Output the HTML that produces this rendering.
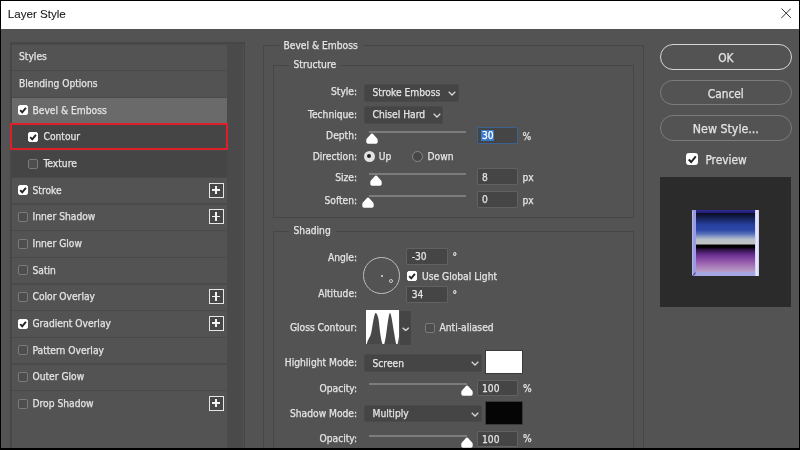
<!DOCTYPE html>
<html><head><meta charset="utf-8"><title>Layer Style</title>
<style>
*{box-sizing:border-box;margin:0;padding:0}
html,body{width:800px;height:450px;overflow:hidden;background:#535353}
body{position:relative;will-change:transform;-webkit-text-stroke:0.25px;font-family:"DejaVu Sans Condensed","Liberation Sans",sans-serif;font-size:10.2px;color:#e4e4e4}
div,span,i,b,svg{position:absolute}
#title{left:0;top:0;width:800px;height:28.6px;background:#fff;color:#1a1a1a}
#title span{-webkit-text-stroke:0.1px;left:7.8px;top:6.5px;font-size:11.6px;font-family:"Liberation Sans",sans-serif;white-space:nowrap}
#title svg{left:780.5px;top:8px}
.bk{background:#000}
#list{left:10px;top:41.6px;width:235px;height:410px;background:#4a4a4a;border:2px solid #474747;border-right:1px solid #464646}
.row{left:12px;width:215px;height:25.4px;background:#535353}
.row.sel{background:#6a6a6a}
.row.sub{background:#454545}
.lbl{top:6.8px;white-space:nowrap}
.cb{top:7.4px;width:10px;height:10px;border:1px solid #7a7a7a;border-radius:2px;background:#4d4d4d}
.cb.on{background:#fff;border-color:#fff}
.cb svg{left:-1px;top:-1px}
.plus{left:196.9px;top:4.9px;width:15.2px;height:15px;border:1.5px solid #e6e6e6;background:#474747}
.plus i{left:1.9px;top:5.1px;width:8.4px;height:1.8px;background:#f2f2f2}
.plus b{left:5.2px;top:1.8px;width:1.8px;height:8.4px;background:#f2f2f2}
#red{left:9.6px;top:123.1px;width:218.7px;height:27.1px;border:2.9px solid #dc1f28}
.grp{border:1px solid #464646}
.gt{background:#535353;padding:0 5px;white-space:nowrap;height:13px;line-height:13px}
.fl{right:442.9px;white-space:nowrap;height:13px;line-height:13px}
.dd{background:#454545;border:1px solid #4a4a4a;border-radius:2px;height:17.5px;left:364px}
.dd span{left:7.5px;top:2px;white-space:nowrap}
.dd svg{top:6px}
.inp{background:#454545;border:1px solid #616161;height:16.6px;border-radius:1px}
.inp span{left:4.5px;top:1.6px;white-space:nowrap}
.u{white-space:nowrap;height:13px;line-height:13px}
.trk{height:2px;background:#7c7c7c}
.th{width:12px;height:12px}
</style></head><body>
<div id="title"><span>Layer Style</span>
<svg width="10.4" height="10.4" viewBox="0 0 11 11"><path d="M0.5 0.5L10.5 10.5M10.5 0.5L0.5 10.5" stroke="#222" stroke-width="1" fill="none"/></svg></div>
<div id="list"></div>
<div style="left:242.8px;top:44px;width:1.3px;height:406px;background:#515151"></div>
<div class="row" style="top:44.60px">
<span class="lbl" style="left:7px">Styles</span>
</div>
<div class="row" style="top:71.27px">
<span class="lbl" style="left:7px">Blending Options</span>
</div>
<div class="row sel" style="top:97.93px">
<span class="cb on" style="left:6px"><svg viewBox="0 0 10 10" width="10" height="10"><path d="M2.2 5.2 L4.2 7.3 L7.9 2.8" fill="none" stroke="#222" stroke-width="1.9"/></svg></span>
<span class="lbl" style="left:20.5px">Bevel &amp; Emboss</span>
</div>
<div class="row sub" style="top:124.60px">
<span class="cb on" style="left:16.2px"><svg viewBox="0 0 10 10" width="10" height="10"><path d="M2.2 5.2 L4.2 7.3 L7.9 2.8" fill="none" stroke="#222" stroke-width="1.9"/></svg></span>
<span class="lbl" style="left:31.5px">Contour</span>
</div>
<div class="row sub" style="top:151.27px">
<span class="cb" style="left:16.2px"></span>
<span class="lbl" style="left:31.5px">Texture</span>
</div>
<div class="row" style="top:177.94px">
<span class="cb on" style="left:6px"><svg viewBox="0 0 10 10" width="10" height="10"><path d="M2.2 5.2 L4.2 7.3 L7.9 2.8" fill="none" stroke="#222" stroke-width="1.9"/></svg></span>
<span class="lbl" style="left:20.5px">Stroke</span>
<span class="plus"><i></i><b></b></span>
</div>
<div class="row" style="top:204.60px">
<span class="cb" style="left:6px"></span>
<span class="lbl" style="left:20.5px">Inner Shadow</span>
<span class="plus"><i></i><b></b></span>
</div>
<div class="row" style="top:231.27px">
<span class="cb" style="left:6px"></span>
<span class="lbl" style="left:20.5px">Inner Glow</span>
</div>
<div class="row" style="top:257.94px">
<span class="cb" style="left:6px"></span>
<span class="lbl" style="left:20.5px">Satin</span>
</div>
<div class="row" style="top:284.60px">
<span class="cb" style="left:6px"></span>
<span class="lbl" style="left:20.5px">Color Overlay</span>
<span class="plus"><i></i><b></b></span>
</div>
<div class="row" style="top:311.27px">
<span class="cb on" style="left:6px"><svg viewBox="0 0 10 10" width="10" height="10"><path d="M2.2 5.2 L4.2 7.3 L7.9 2.8" fill="none" stroke="#222" stroke-width="1.9"/></svg></span>
<span class="lbl" style="left:20.5px">Gradient Overlay</span>
<span class="plus"><i></i><b></b></span>
</div>
<div class="row" style="top:337.94px">
<span class="cb" style="left:6px"></span>
<span class="lbl" style="left:20.5px">Pattern Overlay</span>
</div>
<div class="row" style="top:364.60px">
<span class="cb" style="left:6px"></span>
<span class="lbl" style="left:20.5px">Outer Glow</span>
</div>
<div class="row" style="top:391.27px">
<span class="cb" style="left:6px"></span>
<span class="lbl" style="left:20.5px">Drop Shadow</span>
<span class="plus"><i></i><b></b></span>
</div>
<div class="row" style="top:415px;height:34px"></div>
<div id="red"></div>

<!-- group boxes -->
<div class="grp" style="left:262.5px;top:45px;width:381.5px;height:420px"></div>
<div class="gt" style="left:278.5px;top:39px">Bevel &amp; Emboss</div>
<div class="grp" style="left:272.5px;top:64.8px;width:361.5px;height:153px"></div>
<div class="gt" style="left:288.5px;top:58px">Structure</div>
<div class="grp" style="left:272.5px;top:231px;width:361.5px;height:230px"></div>
<div class="gt" style="left:288.5px;top:224px">Shading</div>

<!-- Structure -->
<div class="fl" style="top:84.8px">Style:</div>
<div class="dd" style="top:84px;width:95px"><span>Stroke Emboss</span><svg style="left:83px" width="8" height="5" viewBox="0 0 8 5"><path d="M0.7 0.7L4 4L7.3 0.7" fill="none" stroke="#d8d8d8" stroke-width="1.25"/></svg></div>
<div class="fl" style="top:107.8px">Technique:</div>
<div class="dd" style="top:106px;width:79px"><span>Chisel Hard</span><svg style="left:67.5px" width="8" height="5" viewBox="0 0 8 5"><path d="M0.7 0.7L4 4L7.3 0.7" fill="none" stroke="#d8d8d8" stroke-width="1.25"/></svg></div>

<div class="fl" style="top:129.3px">Depth:</div>
<div class="trk" style="left:368.8px;top:131.1px;width:97.6px"></div>
<svg class="th" style="left:365.7px;top:133px" viewBox="0 0 12 12"><path d="M6 0.5Q6.7 0.5 7.3 1.3L11.1 5.6Q11.7 6.3 11.7 7.1V9Q11.7 10.8 9.9 10.8H2.1Q0.3 10.8 0.3 9V7.1Q0.3 6.3 0.9 5.6L4.7 1.3Q5.3 0.5 6 0.5Z" fill="#fff"/></svg>
<div class="inp" style="left:476.5px;top:127.2px;width:41.5px;border:1.3px solid #3a628f"><i style="left:3.5px;top:2px;width:12.5px;height:10.6px;background:#3a78c8"></i><span style="color:#fff">30</span></div>
<div class="u" style="left:522.5px;top:129.6px">%</div>

<div class="fl" style="top:149.8px">Direction:</div>
<div style="left:363.7px;top:150.7px;width:11px;height:11px;border-radius:50%;background:#e2e2e2"><i style="left:3.3px;top:3.3px;width:4.4px;height:4.4px;border-radius:50%;background:#222"></i></div>
<div class="u" style="left:378.7px;top:149.8px">Up</div>
<div style="left:411.5px;top:150.7px;width:11px;height:11px;border-radius:50%;background:#474747;border:1.2px solid #888"></div>
<div class="u" style="left:427.5px;top:149.8px">Down</div>

<div class="fl" style="top:171px">Size:</div>
<div class="trk" style="left:368.8px;top:173.4px;width:97.6px"></div>
<svg class="th" style="left:370.4px;top:175.2px" viewBox="0 0 12 12"><path d="M6 0.5Q6.7 0.5 7.3 1.3L11.1 5.6Q11.7 6.3 11.7 7.1V9Q11.7 10.8 9.9 10.8H2.1Q0.3 10.8 0.3 9V7.1Q0.3 6.3 0.9 5.6L4.7 1.3Q5.3 0.5 6 0.5Z" fill="#fff"/></svg>
<div class="inp" style="left:476.5px;top:168.3px;width:41.5px"><span style="top:2.3px">8</span></div>
<div class="u" style="left:522.5px;top:170.5px">px</div>

<div class="fl" style="top:193.5px">Soften:</div>
<div class="trk" style="left:368.8px;top:194.7px;width:97.6px"></div>
<svg class="th" style="left:362px;top:197px" viewBox="0 0 12 12"><path d="M6 0.5Q6.7 0.5 7.3 1.3L11.1 5.6Q11.7 6.3 11.7 7.1V9Q11.7 10.8 9.9 10.8H2.1Q0.3 10.8 0.3 9V7.1Q0.3 6.3 0.9 5.6L4.7 1.3Q5.3 0.5 6 0.5Z" fill="#fff"/></svg>
<div class="inp" style="left:476.5px;top:191.3px;width:41.5px"><span>0</span></div>
<div class="u" style="left:522.5px;top:193.5px">px</div>

<!-- Shading -->
<div class="fl" style="top:251px">Angle:</div>
<div style="left:363.3px;top:257.3px;width:36.8px;height:36.8px;border-radius:50%;border:1px solid #bdbdbd"></div>
<i style="left:381px;top:275px;width:1.5px;height:1.5px;background:#ccc;border-radius:50%"></i>
<i style="left:389.3px;top:279.3px;width:4px;height:4px;border:0.8px solid #ccc;border-radius:50%"></i>
<div class="inp" style="left:406.2px;top:248.2px;width:41.5px"><span>-30</span></div>
<div class="u" style="left:452.5px;top:249.5px">°</div>
<div class="cb on" style="left:406.7px;top:271.2px"><svg viewBox="0 0 10 10" width="10" height="10"><path d="M2.2 5.2 L4.2 7.3 L7.9 2.8" fill="none" stroke="#222" stroke-width="1.9"/></svg></div>
<div class="u" style="left:422px;top:269.5px">Use Global Light</div>
<div class="fl" style="top:286.8px">Altitude:</div>
<div class="inp" style="left:406.2px;top:286.2px;width:41.5px"><span>34</span></div>
<div class="u" style="left:452.5px;top:287.5px">°</div>

<div class="fl" style="top:320.5px">Gloss Contour:</div>
<svg style="left:365.5px;top:310.2px" width="33.4" height="34.3" viewBox="0 0 33.4 34.3"><rect width="33.4" height="34.3" fill="#fff"/><path d="M0.6 34.3C1.5 31 2.8 28.5 4.3 26C5.8 22 6.2 16 7.2 11.5C8 7.5 8.8 3 9.6 3C10.6 3 11.6 5 12.4 8.5C13.3 14 13.8 22 14.8 27C15.4 30.5 16 33 16.6 34.3H18.2C18.8 32 19.4 29 20 25.5C20.8 20 21.6 13 22.4 8.5C23 5 23.5 3 24 3C24.6 3 25.3 6 26 10C26.8 15 27.6 20 28.4 24.5C29 28.5 29.6 32 30.3 34.3H31.6C32.2 32 32.8 28 33.4 24V34.3Z" fill="#484848"/></svg>
<div style="left:399.9px;top:310.5px;width:11.5px;height:34px;background:#454545"><svg style="left:1.8px;top:16.6px" width="7.4" height="4.4" viewBox="0 0 7.4 4.4"><path d="M0.6 0.7L3.7 3.6L6.8 0.7" fill="none" stroke="#d8d8d8" stroke-width="1.3"/></svg></div>
<div class="cb" style="left:424.5px;top:322.8px"></div>
<div class="u" style="left:439.5px;top:320.5px">Anti-aliased</div>

<div class="fl" style="top:356px">Highlight Mode:</div>
<div class="dd" style="top:354.3px;width:117.7px"><span style="top:2.8px">Screen</span><svg style="left:106px" width="8" height="5" viewBox="0 0 8 5"><path d="M0.7 0.7L4 4L7.3 0.7" fill="none" stroke="#d8d8d8" stroke-width="1.25"/></svg></div>
<div style="left:485.4px;top:350.2px;width:37.4px;height:24.3px;background:#fff;border:1px solid #3a3a3a"></div>
<div class="fl" style="top:381.5px">Opacity:</div>
<div class="trk" style="left:368.7px;top:383.2px;width:98px"></div>
<svg class="th" style="left:460.7px;top:385px" viewBox="0 0 12 12"><path d="M6 0.5Q6.7 0.5 7.3 1.3L11.1 5.6Q11.7 6.3 11.7 7.1V9Q11.7 10.8 9.9 10.8H2.1Q0.3 10.8 0.3 9V7.1Q0.3 6.3 0.9 5.6L4.7 1.3Q5.3 0.5 6 0.5Z" fill="#fff"/></svg>
<div class="inp" style="left:476.5px;top:379.5px;width:41.5px;height:16px"><span style="top:2.2px">100</span></div>
<div class="u" style="left:523px;top:381.5px">%</div>

<div class="fl" style="top:406.5px">Shadow Mode:</div>
<div class="dd" style="top:404.7px;width:117.7px"><span>Multiply</span><svg style="left:106px" width="8" height="5" viewBox="0 0 8 5"><path d="M0.7 0.7L4 4L7.3 0.7" fill="none" stroke="#d8d8d8" stroke-width="1.25"/></svg></div>
<div style="left:485.4px;top:401px;width:37.4px;height:24.2px;background:#050505;border:1px solid #3a3a3a"></div>
<div class="fl" style="top:432.2px">Opacity:</div>
<div class="trk" style="left:368.7px;top:434.5px;width:98px"></div>
<svg class="th" style="left:460.7px;top:436.5px" viewBox="0 0 12 12"><path d="M6 0.5Q6.7 0.5 7.3 1.3L11.1 5.6Q11.7 6.3 11.7 7.1V9Q11.7 10.8 9.9 10.8H2.1Q0.3 10.8 0.3 9V7.1Q0.3 6.3 0.9 5.6L4.7 1.3Q5.3 0.5 6 0.5Z" fill="#fff"/></svg>
<div class="inp" style="left:476.5px;top:431px;width:41.5px;height:16px"><span>100</span></div>
<div class="u" style="left:523px;top:432.2px">%</div>

<!-- right column -->
<div class="btn" style="left:660px;top:44.3px;width:131.7px;height:26px;border:1.2px solid #d6d6d6;border-radius:13px"></div>
<div class="bt" style="left:660px;top:51px;width:131.7px;text-align:center;font-size:11.8px">OK</div>
<div class="btn" style="left:660px;top:79.6px;width:131.7px;height:25.6px;border:1px solid #7c7c7c;border-radius:13px"></div>
<div class="bt" style="left:660px;top:86.8px;width:131.7px;text-align:center;font-size:11.8px">Cancel</div>
<div class="btn" style="left:660px;top:115px;width:131.7px;height:25.6px;border:1px solid #7c7c7c;border-radius:13px"></div>
<div class="bt" style="left:660px;top:122.2px;width:131.7px;text-align:center;font-size:12.3px">New Style...</div>
<div class="cb on" style="left:686px;top:153px;width:12.4px;height:12.4px;border-radius:2.5px"><svg viewBox="0 0 10 10" width="12.4" height="12.4" style="left:-1px;top:-1px"><path d="M2.2 5.2 L4.2 7.3 L7.9 2.8" fill="none" stroke="#222" stroke-width="1.6"/></svg></div>
<div class="u" style="left:705.4px;top:153.5px;font-size:11.8px">Preview</div>
<div style="left:660px;top:177.3px;width:131px;height:130px;background:#2b2b2b"></div>
<div style="left:692.4px;top:209.7px;width:66.6px;height:66px;background:#a6a6e2"></div>
<div style="left:692.4px;top:209.7px;width:3.7px;height:66px;background:linear-gradient(to right,#c0c0f6,#9898de 40%,#9c9ce0)"></div>
<div style="left:754.6px;top:209.7px;width:4.4px;height:66px;background:linear-gradient(to right,#c8c8f4,#e8e8ff 35%,#dcdcfa 80%,#c4c4ee)"></div>
<div style="left:696.1px;top:209.7px;width:58.5px;height:3.8px;background:linear-gradient(to bottom,#302c98,#221e74)"></div>
<div style="left:696.1px;top:213.3px;width:58.5px;height:58.4px;background:linear-gradient(to bottom,#080c20 0%,#1a2868 11.5%,#2840a0 20%,#2c48a8 28.6%,#5870b8 35.4%,#90a0c8 40.6%,#b8c0c8 45%,#c4c4c4 52.6%,#000 54.2%,#000 58%,#2a1040 61.5%,#6a3090 71%,#8c50a8 80%,#a878b8 90%,#b8a0c8 100%)"></div>
<svg style="left:692.4px;top:271.6px" width="4" height="4.2" viewBox="0 0 4 4.2"><path d="M0.6 3.8L3.6 0.6" stroke="#28286a" stroke-width="1"/></svg>

<!-- black frame -->
<div class="bk" style="left:0;top:0;width:800px;height:1px"></div>
<div class="bk" style="left:0;top:0;width:1px;height:450px"></div>
<div class="bk" style="left:798.5px;top:0;width:1.5px;height:450px"></div>
<div class="bk" style="left:0;top:447.7px;width:800px;height:2.3px"></div>
</body></html>
